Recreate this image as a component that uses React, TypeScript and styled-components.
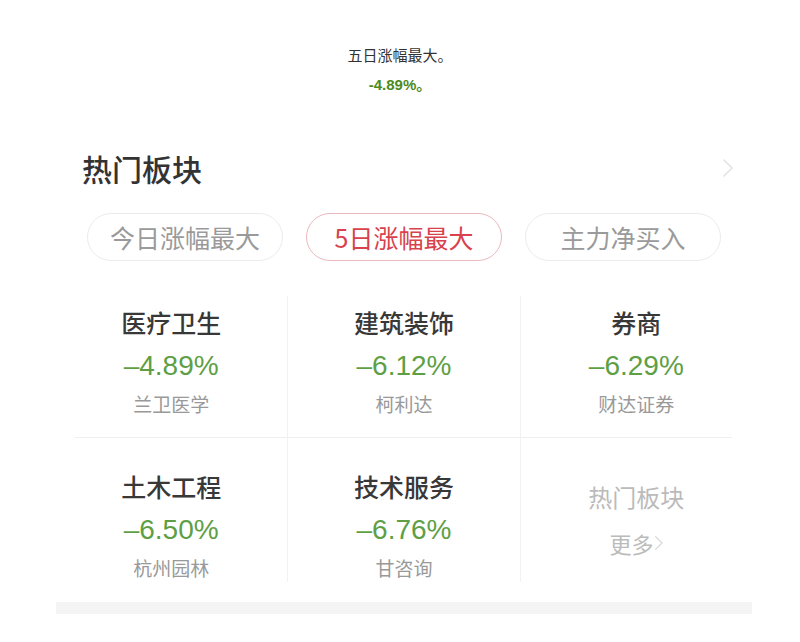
import styled, { createGlobalStyle } from 'styled-components'

const GlobalStyle = createGlobalStyle`
  html, body {
    margin: 0;
    padding: 0;
    background: #fff;
  }
  body {
    font-family: "Noto Sans CJK SC", "Noto Sans", sans-serif;
  }
`

const tabs = ['今日涨幅最大', '5日涨幅最大', '主力净买入']

const sectors = [
  { name: '医疗卫生', pct: '–4.89%', stock: '兰卫医学' },
  { name: '建筑装饰', pct: '–6.12%', stock: '柯利达' },
  { name: '券商', pct: '–6.29%', stock: '财达证券' },
  { name: '土木工程', pct: '–6.50%', stock: '杭州园林' },
  { name: '技术服务', pct: '–6.76%', stock: '甘咨询' },
]

const Page = styled.div`
  width: 800px;
  min-height: 642px;
  background: #fff;
`

const Caption = styled.div`
  padding-top: 44px;
  display: flex;
  flex-direction: column;
  align-items: center;
  gap: 8px;
`

const CaptionText = styled.div`
  font-size: 15px;
  line-height: 22px;
  color: #333;
`

const CaptionValue = styled.div`
  font-family: "Liberation Sans", "Noto Sans CJK SC", sans-serif;
  font-size: 15px;
  font-weight: bold;
  line-height: 22px;
  color: #4b8a1e;
`

const Section = styled.div`
  margin-top: 52px;
  padding: 0 48px 0 55px;
`

const Header = styled.div`
  display: flex;
  align-items: center;
  justify-content: space-between;
  height: 40px;
  padding: 0 18px 0 27px;
`

const Title = styled.h2`
  margin: 0;
  font-size: 30px;
  font-weight: 500;
  line-height: 40px;
  color: #333;
`

const Tabs = styled.div`
  margin-top: 25px;
  padding: 0 31px 0 32px;
  display: grid;
  grid-template-columns: repeat(3, 1fr);
  gap: 23px;
`

const Tab = styled.div<{ $active?: boolean }>`
  height: 48px;
  box-sizing: border-box;
  border-radius: 24px;
  border: 1px solid ${p => (p.$active ? '#ebb9bd' : '#ececec')};
  display: flex;
  align-items: center;
  justify-content: center;
  font-size: 25px;
  color: ${p => (p.$active ? '#d8424c' : '#9a9a9a')};
`

const Grid = styled.div`
  margin-top: 35px;
  display: grid;
  grid-template-columns: repeat(3, 1fr);
`

const Cell = styled.div<{ $col: number; $row: number }>`
  height: ${p => (p.$row === 0 ? 142 : 144)}px;
  box-sizing: border-box;
  padding-top: ${p => (p.$row === 0 ? 10 : 32)}px;
  display: flex;
  flex-direction: column;
  align-items: center;
  border-left: ${p => (p.$col === 0 ? 'none' : '1px solid #f2f2f2')};
  background: ${p =>
    p.$row === 0
      ? `linear-gradient(#efefef, #efefef) ${p.$col === 0 ? 'right' : 'left'} bottom / ${
          p.$col === 1 ? '100%' : 'calc(100% - 20px)'
        } 1px no-repeat`
      : 'none'};
`

const Name = styled.div`
  font-size: 25px;
  font-weight: 500;
  line-height: 32px;
  color: #383838;
`

const Pct = styled.div`
  margin-top: 11px;
  font-family: "Liberation Sans", Roboto, sans-serif;
  font-size: 28px;
  line-height: 34px;
  color: #5e9f45;
`

const Stock = styled.div`
  margin-top: 8px;
  font-size: 19px;
  line-height: 26px;
  color: #999;
`

const MoreCell = styled(Cell)`
  padding-top: 45px;
`

const MoreTitle = styled.div`
  font-size: 24px;
  line-height: 28px;
  color: #bbb;
`

const MoreLink = styled.div`
  margin-top: 18px;
  display: flex;
  align-items: center;
  font-size: 22px;
  line-height: 28px;
  color: #bbb;
`

const Footer = styled.div`
  margin: 20px 48px 0 56px;
  height: 12px;
  background: #f4f4f4;
`

const Chevron = ({ size, color }: { size: number; color: string }) => (
  <svg width={size * 0.6} height={size} viewBox="0 0 12 20" fill="none">
    <path d="M2 2l8 8-8 8" stroke={color} strokeWidth="1.6" strokeLinecap="round" strokeLinejoin="round" />
  </svg>
)

export default function App() {
  return (
    <Page>
      <GlobalStyle />
      <Caption>
        <CaptionText>五日涨幅最大。</CaptionText>
        <CaptionValue>-4.89%。</CaptionValue>
      </Caption>
      <Section>
        <Header>
          <Title>热门板块</Title>
          <Chevron size={20} color="#e2e2e2" />
        </Header>
        <Tabs>
          {tabs.map((t, i) => (
            <Tab key={t} $active={i === 1}>
              {t}
            </Tab>
          ))}
        </Tabs>
        <Grid>
          {sectors.map((s, i) => (
            <Cell key={s.name} $col={i % 3} $row={Math.floor(i / 3)}>
              <Name>{s.name}</Name>
              <Pct>{s.pct}</Pct>
              <Stock>{s.stock}</Stock>
            </Cell>
          ))}
          <MoreCell $col={2} $row={1}>
            <MoreTitle>热门板块</MoreTitle>
            <MoreLink>
              更多
              <Chevron size={16} color="#d8d8d8" />
            </MoreLink>
          </MoreCell>
        </Grid>
      </Section>
      <Footer />
    </Page>
  )
}
